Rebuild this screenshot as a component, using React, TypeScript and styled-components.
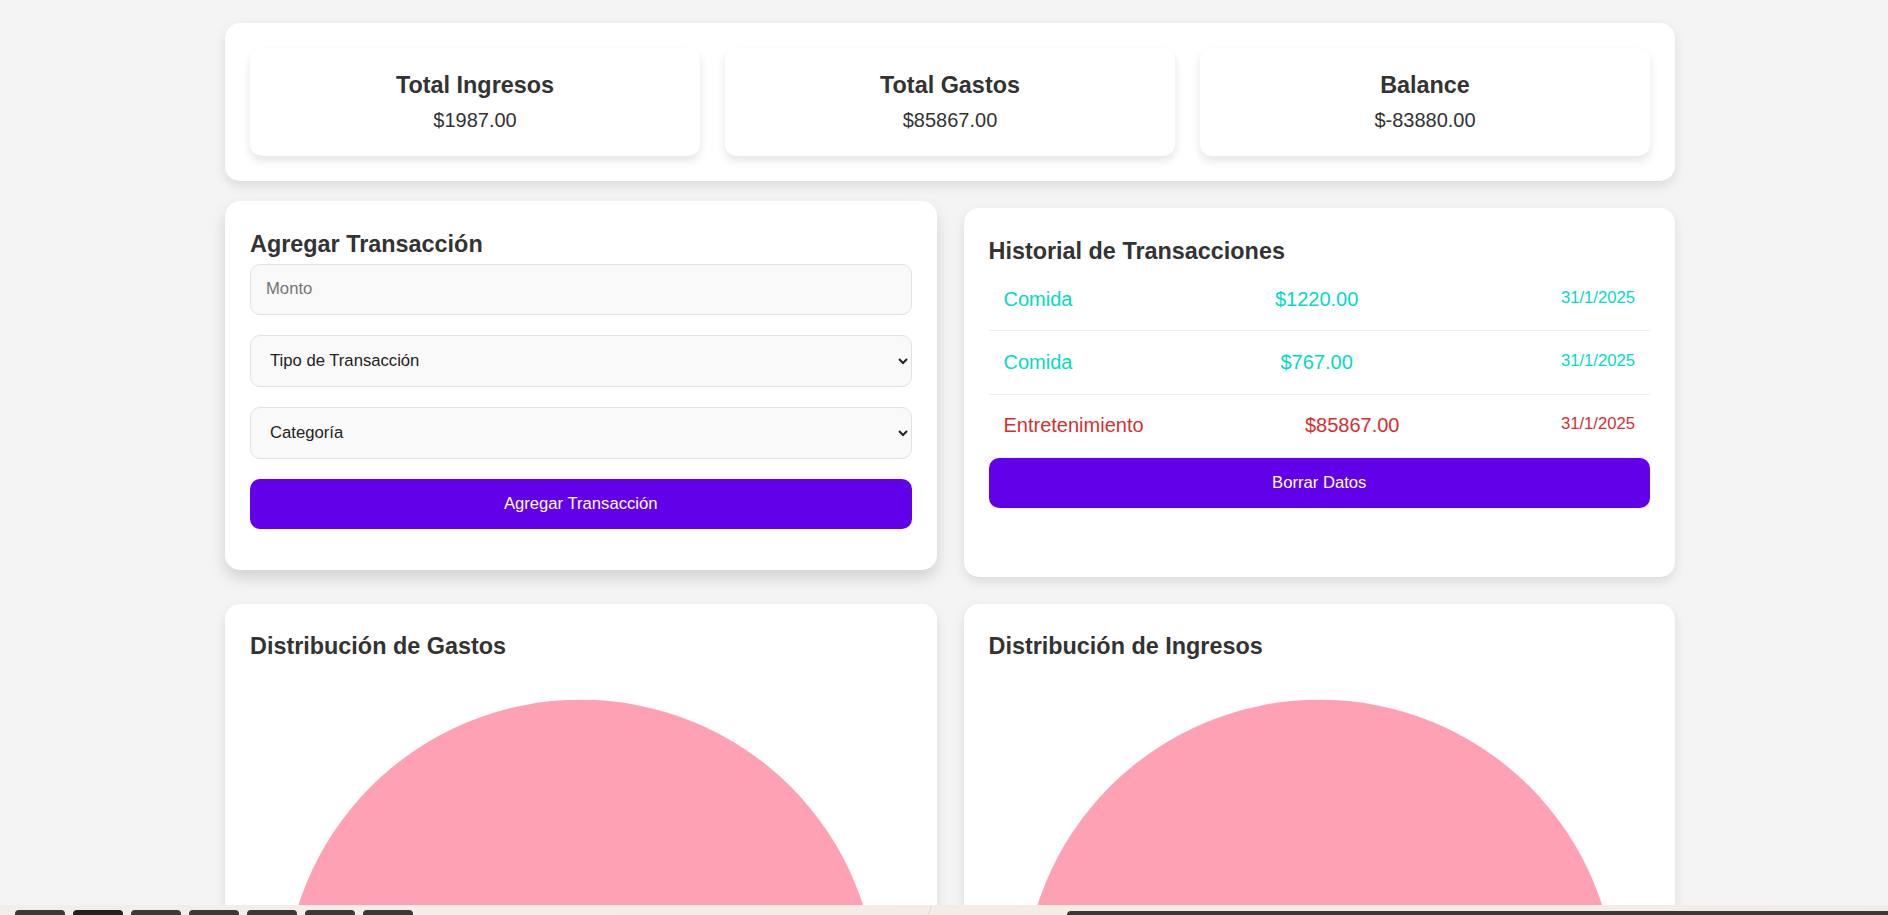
import React from "react";
import styled, { createGlobalStyle } from "styled-components";

const GlobalStyle = createGlobalStyle`
  * { box-sizing: border-box; }
  body {
    margin: 0;
    background: #f4f4f4;
    font-family: "Liberation Sans", Arial, sans-serif;
    color: #333;
  }
`;

const Page = styled.div`
  padding: 23px 0 0 12px;
`;

const Container = styled.main`
  max-width: 1450px;
  margin: 0 auto;
  display: flex;
  flex-direction: column;
  gap: 27px;
`;

const SummaryPanel = styled.section`
  background: #fff;
  border-radius: 15px;
  padding: 25px;
  box-shadow: 0 5px 12px rgba(0, 0, 0, 0.1);
  display: grid;
  grid-template-columns: repeat(3, 1fr);
  gap: 25px;
`;

const SummaryCard = styled.div`
  background: #fff;
  border-radius: 12px;
  padding: 24px 20px 24px;
  text-align: center;
  box-shadow: 0 5px 10px rgba(0, 0, 0, 0.1);
`;

const SummaryTitle = styled.h3`
  margin: 0 0 10px;
  font-size: 23.4px;
  line-height: 27px;
  font-weight: 700;
  color: #333;
`;

const SummaryValue = styled.p`
  margin: 0;
  font-size: 20px;
  line-height: 23px;
  color: #333;
`;

const TwoCols = styled.div`
  display: grid;
  grid-template-columns: 1fr 1fr;
  gap: 27px;
  align-items: stretch;
`;

const Panel = styled.section<{ $raised?: boolean }>`
  background: #fff;
  border-radius: 15px;
  padding: 29.5px 25px 25px;
  box-shadow: ${(p) =>
    p.$raised ? "0 8px 16px rgba(0, 0, 0, 0.14)" : "0 5px 12px rgba(0, 0, 0, 0.1)"};
  transform: ${(p) => (p.$raised ? "translateY(-7px)" : "none")};
`;

const PanelTitle = styled.h3<{ $space: number }>`
  margin: 0 0 ${(p) => p.$space}px;
  font-size: 23.4px;
  line-height: 27px;
  font-weight: 700;
  color: #333;
`;

const TextInput = styled.input`
  display: block;
  width: 100%;
  height: 51px;
  margin: 0 0 20px;
  padding: 0 15px;
  border: 1px solid #e2e2e2;
  border-radius: 10px;
  background: #f9f9f9;
  font-family: "Liberation Sans", Arial, sans-serif;
  font-size: 16.67px;
  color: #222;
  outline: none;
  &::placeholder { color: #757575; }
`;

const Select = styled.select`
  display: block;
  width: 100%;
  height: 52px;
  margin: 0 0 20px;
  padding: 0 11px 0 15px;
  border: 1px solid #e2e2e2;
  border-radius: 10px;
  background-color: #f9f9f9;
  font-family: "Liberation Sans", Arial, sans-serif;
  font-size: 16.67px;
  color: #222;
  outline: none;
`;

const PrimaryButton = styled.button<{ $after?: number }>`
  display: block;
  width: 100%;
  height: 50px;
  margin: 0 0 ${(p) => p.$after ?? 0}px;
  border: none;
  border-radius: 10px;
  background: #6200ea;
  color: #fff;
  font-family: "Liberation Sans", Arial, sans-serif;
  font-size: 16.67px;
  cursor: pointer;
`;

const TxList = styled.ul`
  list-style: none;
  margin: 0;
  padding: 0;
`;

const TxRow = styled.li<{ $kind: "ingreso" | "gasto" }>`
  display: flex;
  justify-content: space-between;
  align-items: flex-start;
  padding: 19.7px 15px;
  border-bottom: 1px solid #eee;
  color: ${(p) => (p.$kind === "ingreso" ? "#03dac6" : "#d32f2f")};
`;

const TxText = styled.span`
  font-size: 20px;
  line-height: 23px;
`;

const TxDate = styled.small`
  font-size: 16.67px;
  line-height: 19px;
`;

const ChartBox = styled.div`
  width: 100%;
  height: 680px;
  svg { display: block; width: 100%; height: 100%; }
`;

const Taskbar = styled.div`
  position: fixed;
  left: 0;
  right: 0;
  bottom: 0;
  height: 10px;
  display: flex;
  align-items: flex-end;
  padding-left: 15px;
  background: linear-gradient(90deg, #f3eeea 0%, #f6ece6 50%, #f3ebe5 100%);
`;

const TaskTab = styled.div<{ $dark?: boolean }>`
  width: 50px;
  height: 5px;
  margin-right: 8px;
  border-radius: 4px 4px 0 0;
  background: ${(p) => (p.$dark ? "#232120" : "#3b3937")};
`;

const TaskSpacer = styled.div`
  width: 646px;
  height: 10px;
  padding-left: 508px;
  display: flex;
  &::after {
    content: "";
    width: 1px;
    height: 12px;
    background: #ddd6e8;
    transform: rotate(18deg);
  }
`;

const TaskWide = styled.div`
  flex: 1;
  height: 4.5px;
  border-radius: 4px 0 0 0;
  background: #3b3937;
`;

type Tx = { cat: string; amount: string; date: string; kind: "ingreso" | "gasto" };

const txs: Tx[] = [
  { cat: "Comida", amount: "$1220.00", date: "31/1/2025", kind: "ingreso" },
  { cat: "Comida", amount: "$767.00", date: "31/1/2025", kind: "ingreso" },
  { cat: "Entretenimiento", amount: "$85867.00", date: "31/1/2025", kind: "gasto" },
];

const PieChart = () => (
  <ChartBox>
    <svg viewBox="0 0 662 680" preserveAspectRatio="xMidYMin meet">
      <circle cx="331" cy="331.7" r="297" fill="rgba(255, 99, 132, 0.6)" />
    </svg>
  </ChartBox>
);

export default function App() {
  return (
    <>
      <GlobalStyle />
      <Page>
        <Container>
          <SummaryPanel>
            <SummaryCard>
              <SummaryTitle>Total Ingresos</SummaryTitle>
              <SummaryValue>$1987.00</SummaryValue>
            </SummaryCard>
            <SummaryCard>
              <SummaryTitle>Total Gastos</SummaryTitle>
              <SummaryValue>$85867.00</SummaryValue>
            </SummaryCard>
            <SummaryCard>
              <SummaryTitle>Balance</SummaryTitle>
              <SummaryValue>$-83880.00</SummaryValue>
            </SummaryCard>
          </SummaryPanel>

          <TwoCols>
            <Panel $raised>
              <PanelTitle $space={6}>Agregar Transacción</PanelTitle>
              <form onSubmit={(e) => e.preventDefault()}>
                <TextInput type="number" placeholder="Monto" />
                <Select defaultValue="">
                  <option value="">Tipo de Transacción</option>
                  <option value="ingreso">Ingreso</option>
                  <option value="gasto">Gasto</option>
                </Select>
                <Select defaultValue="">
                  <option value="">Categoría</option>
                  <option value="comida">Comida</option>
                  <option value="entretenimiento">Entretenimiento</option>
                </Select>
                <PrimaryButton type="submit" $after={16}>
                  Agregar Transacción
                </PrimaryButton>
              </form>
            </Panel>

            <Panel>
              <PanelTitle $space={3.5}>Historial de Transacciones</PanelTitle>
              <TxList>
                {txs.map((t, i) => (
                  <TxRow key={i} $kind={t.kind}>
                    <TxText>{t.cat}</TxText>
                    <TxText>{t.amount}</TxText>
                    <TxDate>{t.date}</TxDate>
                  </TxRow>
                ))}
              </TxList>
              <PrimaryButton type="button">Borrar Datos</PrimaryButton>
            </Panel>
          </TwoCols>

          <TwoCols>
            <Panel>
              <PanelTitle $space={5}>Distribución de Gastos</PanelTitle>
              <PieChart />
            </Panel>
            <Panel>
              <PanelTitle $space={5}>Distribución de Ingresos</PanelTitle>
              <PieChart />
            </Panel>
          </TwoCols>
        </Container>
      </Page>
      <Taskbar>
        <TaskTab />
        <TaskTab $dark />
        <TaskTab />
        <TaskTab />
        <TaskTab />
        <TaskTab />
        <TaskTab />
        <TaskSpacer />
        <TaskWide />
      </Taskbar>
    </>
  );
}
